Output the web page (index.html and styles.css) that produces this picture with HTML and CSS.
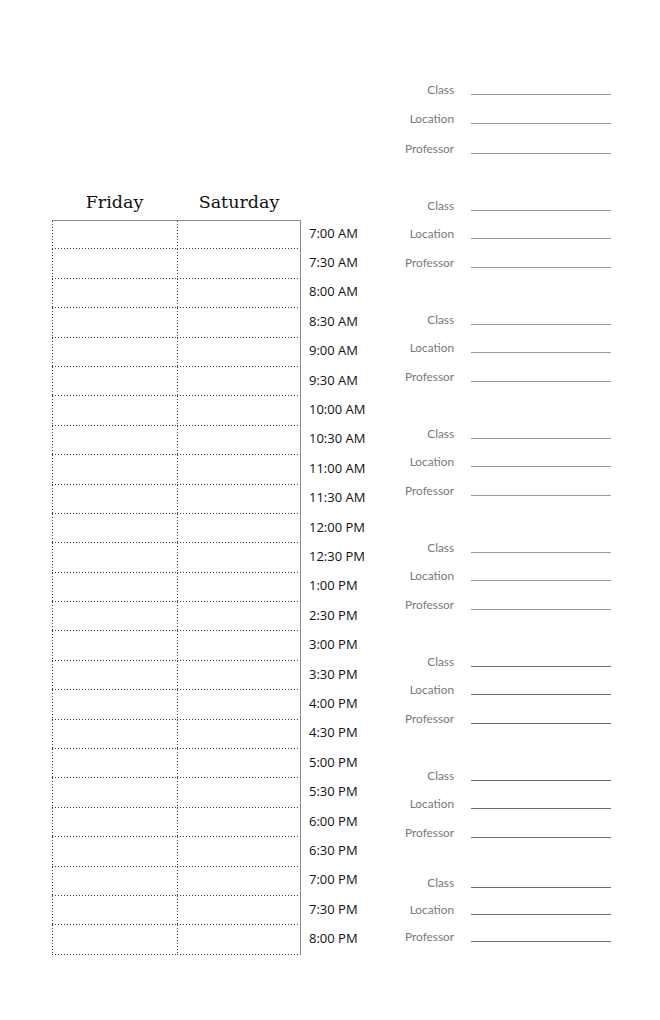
FILE: index.html
```html
<!DOCTYPE html>
<html>
<head>
<meta charset="utf-8">
<link rel="stylesheet" href="styles.css">
</head>
<body>
<div class="page">
  <section class="schedule">
    <div class="heads">
      <div class="head">Friday</div>
      <div class="head">Saturday</div>
    </div>
    <div class="grid">
      <div class="row"><div class="cell fri"></div><div class="cell sat"></div><div class="time">7:00 AM</div></div>
      <div class="row"><div class="cell fri"></div><div class="cell sat"></div><div class="time">7:30 AM</div></div>
      <div class="row"><div class="cell fri"></div><div class="cell sat"></div><div class="time">8:00 AM</div></div>
      <div class="row"><div class="cell fri"></div><div class="cell sat"></div><div class="time">8:30 AM</div></div>
      <div class="row"><div class="cell fri"></div><div class="cell sat"></div><div class="time">9:00 AM</div></div>
      <div class="row"><div class="cell fri"></div><div class="cell sat"></div><div class="time">9:30 AM</div></div>
      <div class="row"><div class="cell fri"></div><div class="cell sat"></div><div class="time">10:00 AM</div></div>
      <div class="row"><div class="cell fri"></div><div class="cell sat"></div><div class="time">10:30 AM</div></div>
      <div class="row"><div class="cell fri"></div><div class="cell sat"></div><div class="time">11:00 AM</div></div>
      <div class="row"><div class="cell fri"></div><div class="cell sat"></div><div class="time">11:30 AM</div></div>
      <div class="row"><div class="cell fri"></div><div class="cell sat"></div><div class="time">12:00 PM</div></div>
      <div class="row"><div class="cell fri"></div><div class="cell sat"></div><div class="time">12:30 PM</div></div>
      <div class="row"><div class="cell fri"></div><div class="cell sat"></div><div class="time">1:00 PM</div></div>
      <div class="row"><div class="cell fri"></div><div class="cell sat"></div><div class="time">2:30 PM</div></div>
      <div class="row"><div class="cell fri"></div><div class="cell sat"></div><div class="time">3:00 PM</div></div>
      <div class="row"><div class="cell fri"></div><div class="cell sat"></div><div class="time">3:30 PM</div></div>
      <div class="row"><div class="cell fri"></div><div class="cell sat"></div><div class="time">4:00 PM</div></div>
      <div class="row"><div class="cell fri"></div><div class="cell sat"></div><div class="time">4:30 PM</div></div>
      <div class="row"><div class="cell fri"></div><div class="cell sat"></div><div class="time">5:00 PM</div></div>
      <div class="row"><div class="cell fri"></div><div class="cell sat"></div><div class="time">5:30 PM</div></div>
      <div class="row"><div class="cell fri"></div><div class="cell sat"></div><div class="time">6:00 PM</div></div>
      <div class="row"><div class="cell fri"></div><div class="cell sat"></div><div class="time">6:30 PM</div></div>
      <div class="row"><div class="cell fri"></div><div class="cell sat"></div><div class="time">7:00 PM</div></div>
      <div class="row"><div class="cell fri"></div><div class="cell sat"></div><div class="time">7:30 PM</div></div>
      <div class="row"><div class="cell fri"></div><div class="cell sat"></div><div class="time">8:00 PM</div></div>
    </div>
  </section>
  <section class="classes">
    <div class="block first">
      <div class="field"><span class="label">Class</span><span class="line"></span></div>
      <div class="field"><span class="label">Location</span><span class="line"></span></div>
      <div class="field"><span class="label">Professor</span><span class="line"></span></div>
    </div>
    <div class="block">
      <div class="field"><span class="label">Class</span><span class="line"></span></div>
      <div class="field"><span class="label">Location</span><span class="line"></span></div>
      <div class="field"><span class="label">Professor</span><span class="line"></span></div>
    </div>
    <div class="block">
      <div class="field"><span class="label">Class</span><span class="line"></span></div>
      <div class="field"><span class="label">Location</span><span class="line"></span></div>
      <div class="field"><span class="label">Professor</span><span class="line"></span></div>
    </div>
    <div class="block">
      <div class="field"><span class="label">Class</span><span class="line"></span></div>
      <div class="field"><span class="label">Location</span><span class="line"></span></div>
      <div class="field"><span class="label">Professor</span><span class="line"></span></div>
    </div>
    <div class="block">
      <div class="field"><span class="label">Class</span><span class="line"></span></div>
      <div class="field"><span class="label">Location</span><span class="line"></span></div>
      <div class="field"><span class="label">Professor</span><span class="line"></span></div>
    </div>
    <div class="block dark">
      <div class="field"><span class="label">Class</span><span class="line"></span></div>
      <div class="field"><span class="label">Location</span><span class="line"></span></div>
      <div class="field"><span class="label">Professor</span><span class="line"></span></div>
    </div>
    <div class="block dark">
      <div class="field"><span class="label">Class</span><span class="line"></span></div>
      <div class="field"><span class="label">Location</span><span class="line"></span></div>
      <div class="field"><span class="label">Professor</span><span class="line"></span></div>
    </div>
    <div class="block dark last">
      <div class="field"><span class="label">Class</span><span class="line"></span></div>
      <div class="field"><span class="label">Location</span><span class="line"></span></div>
      <div class="field"><span class="label">Professor</span><span class="line"></span></div>
    </div>
  </section>
</div>
</body>
</html>
```
FILE: styles.css
```css
html, body {
  margin: 0;
  padding: 0;
  background: #ffffff;
}

.page {
  width: 660px;
  height: 1020px;
  display: flex;
  padding-left: 52px;
  box-sizing: border-box;
}

.schedule {
  width: 338px;
  padding-top: 186px;
  box-sizing: border-box;
}

.heads {
  display: grid;
  grid-template-columns: 125px 124px;
  height: 34px;
  align-items: center;
  padding-bottom: 2px;
  box-sizing: border-box;
}

.head {
  text-align: center;
  font-family: "DejaVu Serif", "Liberation Serif", serif;
  font-size: 17.5px;
  color: #111;
}

.grid {
  display: flex;
  flex-direction: column;
}

.row {
  display: grid;
  grid-template-columns: 125px 124px 1fr;
  height: 29.4px;
}

.cell {
  box-sizing: border-box;
  background:
    linear-gradient(to right, #3a3a3a 1px, transparent 1px) left bottom / 3px 1px repeat-x,
    linear-gradient(to bottom, #3a3a3a 1px, transparent 1px) left top / 1px 3px repeat-y;
}

.sat {
  border-right: 1px solid #8a8a8a;
}

.row:first-child .cell {
  border-top: 1px solid #8a8a8a;
}

.time {
  display: flex;
  align-items: center;
  padding-left: 8px;
  padding-bottom: 4px;
  font-family: "Open Sans", "Liberation Sans", sans-serif;
  font-size: 13px;
  color: #111;
}

.classes {
  width: 221px;
  padding-top: 66px;
  display: flex;
  flex-direction: column;
  gap: 28.5px;
}

.block {
  display: flex;
  flex-direction: column;
}

.field {
  display: grid;
  grid-template-columns: 64px 140px;
  column-gap: 17px;
  align-items: end;
  height: 28.5px;
}

.first .field {
  height: 29.5px;
}

.last {
  margin-top: -5.5px;
}

.last .field {
  height: 27px;
}

.label {
  text-align: right;
  font-family: Lato, "Open Sans", sans-serif;
  font-size: 11.8px;
  line-height: 12px;
  color: #787878;
}

.line {
  display: block;
  border-bottom: 1px solid #9a9a9a;
  height: 0;
  margin-bottom: 1px;
}

.dark .line {
  border-bottom-color: #6e6e6e;
}
```
